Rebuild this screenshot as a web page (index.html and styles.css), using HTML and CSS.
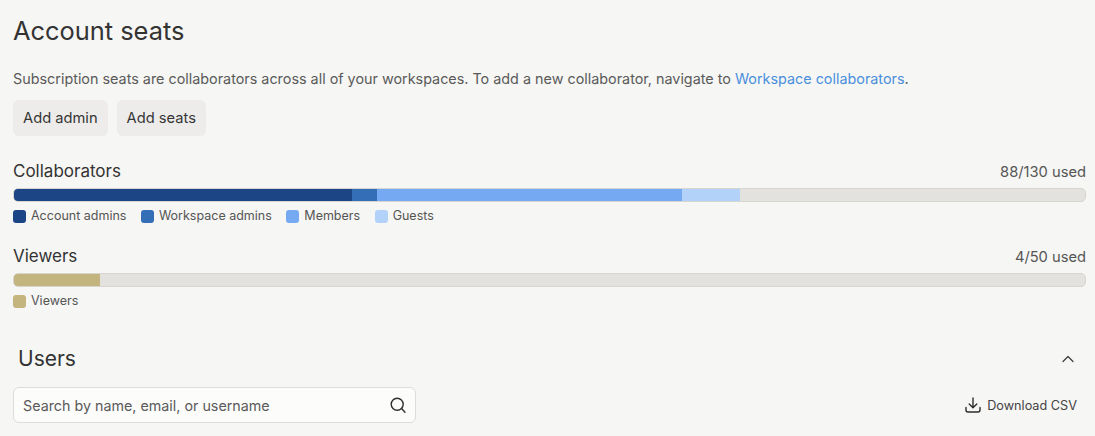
FILE: index.html
```html
<!DOCTYPE html>
<html lang="en">
<head>
<meta charset="utf-8">
<title>Account seats</title>
<link rel="stylesheet" href="styles.css">
</head>
<body>
<main class="page">
  <h1 class="title">Account seats</h1>
  <p class="intro">Subscription seats are collaborators across all of your workspaces. To add a new collaborator, navigate to <a class="link" href="#">Workspace collaborators</a>.</p>
  <div class="actions">
    <button class="btn">Add admin</button>
    <button class="btn">Add seats</button>
  </div>
  <section class="usage usage-first">
    <div class="usage-head"><span class="usage-name">Collaborators</span><span class="usage-count">88/130 used</span></div>
    <div class="bar">
      <span class="seg c-admin" style="width:31.6%"></span>
      <span class="seg c-ws" style="width:2.3%"></span>
      <span class="seg c-member" style="width:28.5%"></span>
      <span class="seg c-guest" style="width:5.4%"></span>
    </div>
    <ul class="legend">
      <li class="legend-item"><i class="swatch c-admin"></i>Account admins</li>
      <li class="legend-item"><i class="swatch c-ws"></i>Workspace admins</li>
      <li class="legend-item"><i class="swatch c-member"></i>Members</li>
      <li class="legend-item"><i class="swatch c-guest"></i>Guests</li>
    </ul>
  </section>
  <section class="usage">
    <div class="usage-head"><span class="usage-name">Viewers</span><span class="usage-count">4/50 used</span></div>
    <div class="bar">
      <span class="seg c-viewer" style="width:8%"></span>
    </div>
    <ul class="legend">
      <li class="legend-item"><i class="swatch c-viewer"></i>Viewers</li>
    </ul>
  </section>
  <div class="users-head">
    <h2 class="users-title">Users</h2>
    <svg class="chevron" width="12" height="8" viewBox="0 0 12 8" fill="none" stroke="#3a3a3a" stroke-width="1.2" stroke-linecap="round" stroke-linejoin="round"><path d="M1 6.500 6 1.500l5 5"/></svg>
  </div>
  <div class="tools">
    <label class="search">
      <span class="search-text">Search by name, email, or username</span>
      <svg width="18" height="18" viewBox="0 0 18 18" fill="none" stroke="#2e2e2e" stroke-width="1.4" stroke-linecap="round"><circle cx="8.200" cy="8.200" r="6"/><path d="m12.600 12.600 3.400 3.600"/></svg>
    </label>
    <a class="download" href="#">
      <svg width="18" height="18" viewBox="0 0 18 18" fill="none" stroke="#2e2e2e" stroke-width="1.4" stroke-linecap="round" stroke-linejoin="round"><path d="M9 2v9.500M5.200 8 9 11.800 12.800 8M2 11.500V14a2 2 0 0 0 2 2h10a2 2 0 0 0 2-2v-2.500"/></svg>
      <span>Download CSV</span>
    </a>
  </div>
</main>
</body>
</html>
```
FILE: styles.css
```css
* { box-sizing: border-box; }
html, body { margin: 0; padding: 0; height: 100%; overflow: hidden; }
body {
  background: #f6f6f4;
  color: #353535;
  font-family: Inter, "Liberation Sans", sans-serif;
}
.page { padding: 15px 9px 0 13px; }
.title { margin: 0; font-size: 25.4px; line-height: 32px; font-weight: 400; color: #333; }
.intro { margin: 20px 0 0; font-size: 14.37px; line-height: 24px; color: #5a5a5a; }
.link { color: #4a8fdc; text-decoration: none; }
.actions { display: flex; gap: 9px; margin-top: 9px; }
.btn {
  height: 36px; padding: 0 10px; border: 0; border-radius: 6px;
  background: #edecea; color: #353535;
  font: 400 14.700px/20px Inter, "Liberation Sans", sans-serif;
}
.usage { margin-top: 22px; }
.usage-first { margin-top: 24px; }
.usage-head { display: flex; justify-content: space-between; align-items: baseline; height: 28px; line-height: 22px; }
.usage-name { font-size: 17px; color: #333; }
.usage-count { font-size: 14.700px; color: #555; }
.bar {
  display: flex; height: 14px; overflow: hidden;
  background: #e3e2de; border: 1px solid #d6d5d0; border-radius: 5px;
}
.seg { display: block; height: 100%; }
.c-admin { background: #1c4585; }
.c-ws { background: #346eb7; }
.c-member { background: #75aaf3; }
.c-guest { background: #b3d2fa; }
.c-viewer { background: #c3b57d; }
.legend { display: flex; gap: 14.500px; margin: 7px 0 0; padding: 0; list-style: none; }
.legend-item { display: flex; align-items: center; gap: 5px; font-size: 12.500px; line-height: 14px; color: #555; }
.swatch { display: block; width: 13px; height: 13px; border-radius: 3px; }
.users-head { display: flex; justify-content: space-between; align-items: center; margin-top: 35px; padding: 0 12px 0 5px; }
.users-title { margin: 0; font-size: 21px; line-height: 32px; font-weight: 400; color: #333; }
.tools { display: flex; justify-content: space-between; align-items: center; margin-top: 12px; padding-right: 9px; }
.search {
  display: flex; justify-content: space-between; align-items: center;
  width: 403px; height: 36px; padding: 0 8px 0 9px;
  background: #fcfcfb; border: 1px solid #deddd9; border-radius: 6px;
}
.search-text { font-size: 14.300px; color: #5a5a5a; }
.download { display: flex; align-items: center; gap: 5px; font-size: 12.700px; color: #444; text-decoration: none; }
```
